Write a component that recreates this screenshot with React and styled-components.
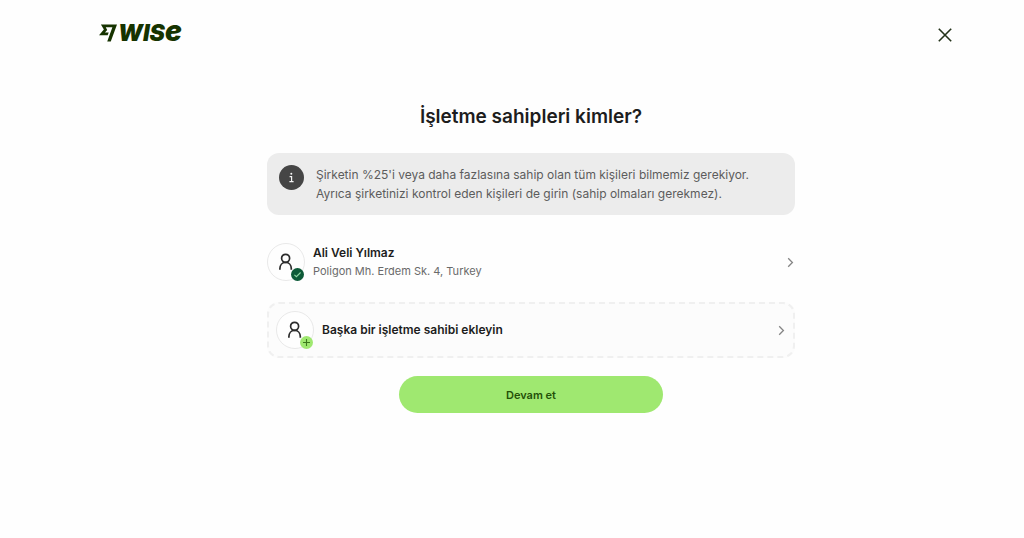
import React from "react";
import styled, { createGlobalStyle } from "styled-components";

const GlobalStyle = createGlobalStyle`
  * {
    box-sizing: border-box;
  }

  body {
    margin: 0;
    background: #fefefe;
    color: #1d1d1d;
    font-family: Inter, "Liberation Sans", sans-serif;
  }
`;

// Layout
const Header = styled.header`
  display: flex;
  align-items: center;
  justify-content: space-between;
  padding: 20px 68px 0 99px;
`;

const Content = styled.main`
  display: flex;
  flex-direction: column;
  align-items: center;
  max-width: 566px;
  margin: 0 auto;
  padding-left: 38px;
`;

// Header
const Logo = styled.a`
  display: flex;
  align-items: center;
  gap: 1px;
  color: #163300;
  text-decoration: none;
`;

const Wordmark = styled.span`
  font-size: 23px;
  font-style: italic;
  font-weight: 900;
  line-height: 26px;
`;

const WordmarkEnd = styled.span`
  font-size: 28px;
  line-height: 20px;
`;

const CloseButton = styled.button`
  display: flex;
  margin-top: 4px;
  padding: 4px;
  border: 0;
  background: none;
  color: #24331a;
  cursor: pointer;
`;

// Content
const Title = styled.h1`
  margin: 57px 0 23px;
  font-size: 19px;
  font-weight: 600;
  line-height: 27px;
`;

const Notice = styled.div`
  display: flex;
  gap: 12px;
  width: 100%;
  padding: 12px;
  border-radius: 12px;
  background: #ececec;
`;

const NoticeText = styled.p`
  margin: 0;
  color: #5c5c5c;
  font-size: 12px;
  line-height: 19px;
`;

const Owners = styled.div`
  display: flex;
  flex-direction: column;
  gap: 21px;
  width: 100%;
  margin: 28px 0 18px;
`;

const OwnerButton = styled.button`
  display: flex;
  align-items: center;
  gap: 8px;
  width: 100%;
  padding: ${({ $dashed }) => ($dashed ? "7px" : "0")};
  border: ${({ $dashed }) => ($dashed ? "2px dashed #f0f0f0" : "0")};
  border-radius: 12px;
  background: ${({ $dashed }) => ($dashed ? "#fcfcfc" : "none")};
  color: inherit;
  font-family: inherit;
  text-align: left;
  cursor: pointer;
`;

const Avatar = styled.span`
  position: relative;
  display: flex;
  align-items: center;
  justify-content: center;
  flex: none;
  width: 38px;
  height: 38px;
  border: 1px solid #e9e9e9;
  border-radius: 50%;
  background: #fefefe;
`;

const Badge = styled.span`
  position: absolute;
  right: 0;
  bottom: -1px;
  display: flex;
  align-items: center;
  justify-content: center;
  width: 13px;
  height: 13px;
  border-radius: 50%;
  background: ${({ $color }) => $color};
`;

const OwnerInfo = styled.span`
  display: flex;
  flex: 1;
  flex-direction: column;
`;

const OwnerName = styled.span`
  font-size: 12px;
  font-weight: 600;
  line-height: 18px;
`;

const OwnerAddress = styled.span`
  color: #6a6a6a;
  font-size: 11px;
  line-height: 18px;
`;

const SubmitButton = styled.button`
  width: 50%;
  height: 37px;
  border: 0;
  border-radius: 19px;
  background: #9fe870;
  color: #245008;
  font-family: inherit;
  font-size: 11px;
  font-weight: 600;
  cursor: pointer;
`;

// Icons
const FlagIcon = () => (
  <svg width="18" height="18" viewBox="0 0 24 24" fill="currentColor" aria-hidden="true">
    <path d="M6.488 7.469 0 15.05h11.585l1.301-3.576H7.922l3.033-3.507.01-.092L8.993 4.48h8.873l-6.878 18.925h4.706L24 .595H2.543l3.945 6.874Z" />
  </svg>
);

const CloseIcon = () => (
  <svg width="14" height="14" viewBox="0 0 14 14" fill="none" stroke="currentColor" strokeWidth="1.6" aria-hidden="true">
    <path d="M.8.8l12.4 12.4M13.2.8L.8 13.2" />
  </svg>
);

const InfoIcon = () => (
  <svg width="25" height="25" viewBox="0 0 25 25" aria-hidden="true">
    <circle cx="12.5" cy="12.5" r="12.5" fill="#454545" />
    <circle cx="12.3" cy="8.8" r="1" fill="#f4f4f4" />
    <path d="M10.6 11.6h2v5M10.4 16.6h4.2" fill="none" stroke="#f4f4f4" strokeWidth="1.2" />
  </svg>
);

const PersonIcon = () => (
  <svg width="18" height="18" viewBox="0 0 18 18" fill="none" stroke="#2b2b2b" strokeWidth="1.7" aria-hidden="true">
    <circle cx="8.6" cy="5.3" r="4" />
    <path d="M2.9 16.8v-1.2c0-3.4 2.3-6.2 5.7-6.2s5.7 2.8 5.7 6.2v1.2" />
  </svg>
);

const CheckIcon = () => (
  <svg width="9" height="9" viewBox="0 0 9 9" fill="none" stroke="#8fd6a4" strokeWidth="1.1" aria-hidden="true">
    <path d="M1.4 4.8l2 1.9 4.2-4.2" />
  </svg>
);

const PlusIcon = () => (
  <svg width="9" height="9" viewBox="0 0 9 9" fill="none" stroke="#3c7a1c" strokeWidth="1.1" aria-hidden="true">
    <path d="M4.5 1v7M1 4.5h7" />
  </svg>
);

const ChevronIcon = () => (
  <svg width="11" height="11" viewBox="0 0 11 11" fill="none" stroke="#858585" strokeWidth="1.3" aria-hidden="true">
    <path d="M4.2 1.3l4.2 4.2-4.2 4.2" />
  </svg>
);

const App = () => (
  <>
    <GlobalStyle />
    <Header>
      <Logo href="#">
        <FlagIcon />
        <Wordmark>
          WIS<WordmarkEnd>e</WordmarkEnd>
        </Wordmark>
      </Logo>
      <CloseButton type="button" aria-label="Kapat">
        <CloseIcon />
      </CloseButton>
    </Header>
    <Content>
      <Title>İşletme sahipleri kimler?</Title>
      <Notice>
        <InfoIcon />
        <NoticeText>
          Şirketin %25'i veya daha fazlasına sahip olan tüm kişileri bilmemiz gerekiyor.
          <br />
          Ayrıca şirketinizi kontrol eden kişileri de girin (sahip olmaları gerekmez).
        </NoticeText>
      </Notice>
      <Owners>
        <OwnerButton type="button">
          <Avatar>
            <PersonIcon />
            <Badge $color="#0d5a38">
              <CheckIcon />
            </Badge>
          </Avatar>
          <OwnerInfo>
            <OwnerName>Ali Veli Yılmaz</OwnerName>
            <OwnerAddress>Poligon Mh. Erdem Sk. 4, Turkey</OwnerAddress>
          </OwnerInfo>
          <ChevronIcon />
        </OwnerButton>
        <OwnerButton type="button" $dashed>
          <Avatar>
            <PersonIcon />
            <Badge $color="#9fe870">
              <PlusIcon />
            </Badge>
          </Avatar>
          <OwnerInfo>
            <OwnerName>Başka bir işletme sahibi ekleyin</OwnerName>
          </OwnerInfo>
          <ChevronIcon />
        </OwnerButton>
      </Owners>
      <SubmitButton type="submit">Devam et</SubmitButton>
    </Content>
  </>
);

export default App;
